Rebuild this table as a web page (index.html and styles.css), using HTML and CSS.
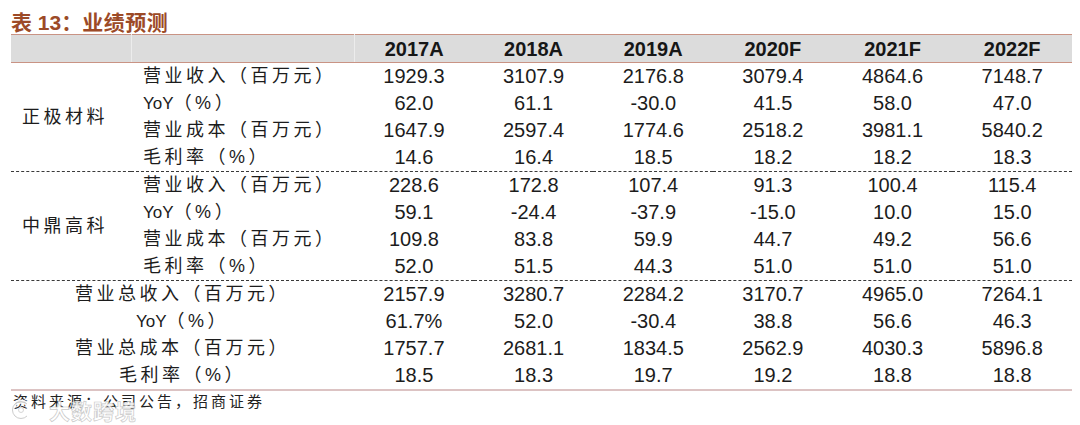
FILE: index.html
```html
<!DOCTYPE html>
<html lang="zh-CN">
<head>
<meta charset="utf-8">
<title>表13：业绩预测</title>
<link rel="stylesheet" href="styles.css">
</head>
<body>
<div class="page">
  <h1 class="title">表 13：<span class="title-zh">业绩预测</span></h1>
  <table class="forecast">
    <colgroup>
      <col class="c-group">
      <col class="c-label">
      <col class="c-num"><col class="c-num"><col class="c-num">
      <col class="c-num"><col class="c-num"><col class="c-num">
    </colgroup>
    <thead>
      <tr>
        <th class="blank sep"></th>
        <th class="blank sep"></th>
        <th>2017A</th><th>2018A</th><th>2019A</th><th>2020F</th><th>2021F</th><th>2022F</th>
      </tr>
    </thead>
    <tbody class="group">
      <tr>
        <td class="grp" rowspan="4"><span class="zh">正极材料</span></td>
        <td class="lbl"><span class="zh">营业收入（百万元）</span></td>
        <td>1929.3</td><td>3107.9</td><td>2176.8</td><td>3079.4</td><td>4864.6</td><td>7148.7</td>
      </tr>
      <tr>
        <td class="lbl">YoY<span class="zh">（%）</span></td>
        <td>62.0</td><td>61.1</td><td>-30.0</td><td>41.5</td><td>58.0</td><td>47.0</td>
      </tr>
      <tr>
        <td class="lbl"><span class="zh">营业成本（百万元）</span></td>
        <td>1647.9</td><td>2597.4</td><td>1774.6</td><td>2518.2</td><td>3981.1</td><td>5840.2</td>
      </tr>
      <tr>
        <td class="lbl"><span class="zh">毛利率（%）</span></td>
        <td>14.6</td><td>16.4</td><td>18.5</td><td>18.2</td><td>18.2</td><td>18.3</td>
      </tr>
    </tbody>
    <tbody class="group">
      <tr>
        <td class="grp" rowspan="4"><span class="zh">中鼎高科</span></td>
        <td class="lbl"><span class="zh">营业收入（百万元）</span></td>
        <td>228.6</td><td>172.8</td><td>107.4</td><td>91.3</td><td>100.4</td><td>115.4</td>
      </tr>
      <tr>
        <td class="lbl">YoY<span class="zh">（%）</span></td>
        <td>59.1</td><td>-24.4</td><td>-37.9</td><td>-15.0</td><td>10.0</td><td>15.0</td>
      </tr>
      <tr>
        <td class="lbl"><span class="zh">营业成本（百万元）</span></td>
        <td>109.8</td><td>83.8</td><td>59.9</td><td>44.7</td><td>49.2</td><td>56.6</td>
      </tr>
      <tr>
        <td class="lbl"><span class="zh">毛利率（%）</span></td>
        <td>52.0</td><td>51.5</td><td>44.3</td><td>51.0</td><td>51.0</td><td>51.0</td>
      </tr>
    </tbody>
    <tbody class="group total">
      <tr>
        <td class="tot" colspan="2"><span class="zh">营业总收入（百万元）</span></td>
        <td>2157.9</td><td>3280.7</td><td>2284.2</td><td>3170.7</td><td>4965.0</td><td>7264.1</td>
      </tr>
      <tr>
        <td class="tot" colspan="2">YoY<span class="zh">（%）</span></td>
        <td>61.7%</td><td>52.0</td><td>-30.4</td><td>38.8</td><td>56.6</td><td>46.3</td>
      </tr>
      <tr>
        <td class="tot" colspan="2"><span class="zh">营业总成本（百万元）</span></td>
        <td>1757.7</td><td>2681.1</td><td>1834.5</td><td>2562.9</td><td>4030.3</td><td>5896.8</td>
      </tr>
      <tr>
        <td class="tot" colspan="2"><span class="zh">毛利率（%）</span></td>
        <td>18.5</td><td>18.3</td><td>19.7</td><td>19.2</td><td>18.8</td><td>18.8</td>
      </tr>
    </tbody>
  </table>
  <p class="source">资料来源：公司公告，招商证券</p>
  <div class="watermark" aria-hidden="true">
    <svg class="wm-logo" width="20" height="22" viewBox="0 0 20 22">
      <path d="M16 5 A8.5 8.5 0 1 0 16 17" fill="none" stroke="#ffffff" stroke-width="4" stroke-linecap="round"/>
      <path d="M16 5 A8.5 8.5 0 1 0 16 17" fill="none" stroke="#c8c8c8" stroke-width="1"/>
      <circle cx="10" cy="11" r="2.5" fill="#ffffff" stroke="#c8c8c8" stroke-width="0.8"/>
    </svg>
    <span class="wm-text">大数跨境</span>
  </div>
</div>
</body>
</html>
```

FILE: styles.css
```css
* {
  box-sizing: border-box;
}

html, body {
  margin: 0;
  padding: 0;
  background: #ffffff;
}

.page {
  position: relative;
  width: 1080px;
  height: 425px;
  padding: 9px 0 0 11px;
  font-family: "Liberation Sans", "Noto Sans CJK SC", sans-serif;
  color: #1c1c1c;
}

.title {
  margin: 0;
  height: 25px;
  font-family: "Liberation Sans", "Noto Sans CJK SC", sans-serif;
  font-size: 21px;
  font-weight: bold;
  line-height: 27px;
  color: #9c4a27;
}

.title-zh {
  letter-spacing: 0.5px;
}

.forecast {
  width: 1061px;
  table-layout: fixed;
  border-collapse: collapse;
  border-spacing: 0;
}

.c-group { width: 120px; }
.c-label { width: 223px; }
.c-num   { width: 119.6px; }

.forecast thead th {
  height: 28px;
  padding: 0;
  background: #dcdcdc;
  border-top: 1px solid #c99384;
  border-bottom: 1px solid #c99384;
  font-size: 20px;
  font-weight: bold;
  color: #161616;
  text-align: center;
  vertical-align: middle;
  line-height: 26px;
}

.forecast thead th.sep {
  border-right: 1px solid #ececec;
}

.forecast td {
  height: 27px;
  padding: 0;
  font-size: 20px;
  line-height: 27px;
  text-align: center;
  vertical-align: middle;
  white-space: nowrap;
}

.forecast tbody.group + tbody.group tr:first-child td {
  border-top: 1px dashed #3a3a3a;
}

.forecast tbody.total tr:last-child td {
  border-bottom: 2px solid #dcc3c3;
}

.forecast td.lbl,
.forecast td.grp,
.forecast td.tot {
  font-size: 17px;
  color: #1c1c1c;
}

.forecast td.lbl {
  text-align: left;
  padding-left: 12px;
}

.forecast td.grp {
  text-align: center;
  padding-right: 12px;
}

.forecast td.tot {
  text-align: center;
}

.zh {
  font-size: 18px;
  letter-spacing: 3.5px;
}

.source {
  margin: 0 0 0 2px;
  font-family: "Noto Sans CJK SC", sans-serif;
  font-size: 15px;
  line-height: 20px;
  letter-spacing: 3px;
  color: #222222;
}

.watermark {
  position: absolute;
  left: 11px;
  top: 398px;
  display: flex;
  align-items: center;
  gap: 18px;
  opacity: 0.9;
}

.wm-text {
  font-family: "Noto Sans CJK SC", sans-serif;
  font-size: 21px;
  font-weight: bold;
  letter-spacing: 1px;
  line-height: 24px;
  color: #ffffff;
  -webkit-text-stroke: 0.7px #c4c4c4;
}
```
